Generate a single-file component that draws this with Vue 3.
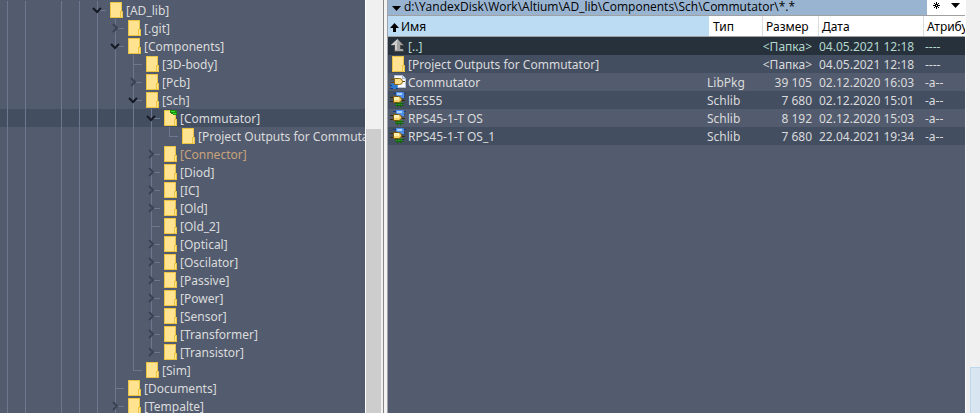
<script setup>
import { ref } from 'vue'

// depth is the guide column that joins the row to its parent
const tree = [
  { depth: 5, name: '[AD_lib]', state: 'open' },
  { depth: 6, name: '[.git]', state: 'closed' },
  { depth: 6, name: '[Components]', state: 'open' },
  { depth: 7, name: '[3D-body]' },
  { depth: 7, name: '[Pcb]', state: 'closed' },
  { depth: 7, name: '[Sch]', state: 'open' },
  { depth: 8, name: '[Commutator]', state: 'open', marked: true },
  { depth: 9, name: '[Project Outputs for Commutator]', last: true },
  { depth: 8, name: '[Connector]', state: 'closed', tinted: true },
  { depth: 8, name: '[Diod]', state: 'closed' },
  { depth: 8, name: '[IC]', state: 'closed' },
  { depth: 8, name: '[Old]', state: 'closed' },
  { depth: 8, name: '[Old_2]' },
  { depth: 8, name: '[Optical]', state: 'closed' },
  { depth: 8, name: '[Oscilator]', state: 'closed' },
  { depth: 8, name: '[Passive]', state: 'closed' },
  { depth: 8, name: '[Power]', state: 'closed' },
  { depth: 8, name: '[Sensor]', state: 'closed' },
  { depth: 8, name: '[Transformer]', state: 'closed' },
  { depth: 8, name: '[Transistor]', state: 'closed', last: true },
  { depth: 7, name: '[Sim]', last: true },
  { depth: 6, name: '[Documents]' },
  { depth: 6, name: '[Tempalte]', state: 'closed' },
]
const selected = ref('[Commutator]')

// the branch in this column has already ended above
const endedColumn = 2

const files = [
  { icon: 'up', name: '[..]', type: '', size: '<Папка>', date: '04.05.2021 12:18', attr: '----' },
  { icon: 'folder', name: '[Project Outputs for Commutator]', type: '', size: '<Папка>', date: '04.05.2021 12:18', attr: '----' },
  { icon: 'pkg', name: 'Commutator', type: 'LibPkg', size: '39 105', date: '02.12.2020 16:03', attr: '-a--' },
  { icon: 'sch', name: 'RES55', type: 'Schlib', size: '7 680', date: '02.12.2020 15:01', attr: '-a--' },
  { icon: 'sch', name: 'RPS45-1-T OS', type: 'Schlib', size: '8 192', date: '02.12.2020 15:03', attr: '-a--' },
  { icon: 'sch', name: 'RPS45-1-T OS_1', type: 'Schlib', size: '7 680', date: '22.04.2021 19:34', attr: '-a--' },
]
</script>

<template>
  <main class="app">
    <nav class="tree" aria-label="Папки">
      <ul>
        <li v-for="n in tree" :key="n.name" class="node" :class="{ selected: n.name === selected, tinted: n.tinted }">
          <span v-for="c in n.depth" :key="c" class="guide" :class="{ run: c - 1 !== endedColumn }"></span>
          <span class="guide branch" :class="{ run: !n.last, half: n.last, short: n.state }">
            <button v-if="n.state" class="toggle" type="button" :aria-label="n.name" :aria-expanded="n.state === 'open'">
              <svg width="10" height="10" viewBox="0 0 10 10" :class="n.state">
                <path v-if="n.state === 'open'" d="M1 3 5 7 9 3" />
                <path v-else d="M3 1 7 5 3 9" />
              </svg>
            </button>
          </span>
          <a class="label" href="#" @click.prevent="selected = n.name">
            <svg class="folder" width="13" height="16" viewBox="0 0 13 16">
              <rect x=".5" y=".5" width="11" height="15" fill="#ffe391" stroke="#ebc444" />
              <rect x="10.5" y="9.5" width="2" height="6" fill="#ffe391" stroke="#ebc444" />
              <g v-if="n.marked">
                <path d="M6 0h6v1h1v4H9V4H7V3H6z" fill="#178a17" />
                <path d="M7 1h4v1H7zM9 3h3v1H9z" fill="#3fe01c" />
              </g>
            </svg>
            <span class="text">{{ n.name }}</span>
          </a>
        </li>
      </ul>
    </nav>
    <div class="scroll"><div class="thumb"></div></div>
    <div class="splitter"></div>
    <section class="files">
      <header class="pathbar">
        <button class="path" type="button">
          <svg width="9" height="5" viewBox="0 0 9 5"><path d="M0 0h9L4.5 5z" /></svg>
          <span>d:\YandexDisk\Work\Altium\AD_lib\Components\Sch\Commutator\*.*</span>
        </button>
        <button class="tool" type="button" aria-label="Избранное">
          <svg width="7" height="7" viewBox="0 0 7 7"><path d="M3.5 0v7M0 3.5h7M1 1l5 5M6 1 1 6" stroke="#000" /><path d="M3 3h1v1H3z" fill="#fff" /></svg>
        </button>
        <button class="tool" type="button" aria-label="История">
          <svg width="9" height="5" viewBox="0 0 9 5"><path d="M0 0h9L4.5 5z" /></svg>
        </button>
      </header>
      <table>
        <colgroup><col /><col class="c-type" /><col class="c-size" /><col class="c-date" /><col class="c-attr" /></colgroup>
        <thead>
          <tr>
            <th class="sorted" aria-sort="ascending">
              <button type="button">
                <svg width="9" height="9" viewBox="0 0 9 9"><path d="M4.5 0 9 5H6v4H3V5H0z" /></svg>Имя
              </button>
            </th>
            <th><button type="button">Тип</button></th>
            <th><button type="button">Размер</button></th>
            <th><button type="button">Дата</button></th>
            <th><button type="button">Атрибу</button></th>
          </tr>
        </thead>
        <tbody>
          <tr v-for="f in files" :key="f.name" :class="{ parent: f.icon === 'up' }">
            <td class="name">
              <div class="entry">
                <svg v-if="f.icon === 'up'" width="16" height="16" viewBox="0 0 16 16">
                  <path d="M7.5 1 14 7v1h-3v3h3v3H4V8H1V7z" fill="#4c4c4c" />
                  <path d="M7.5 1 13 7h-3v4h3v2H5V7H1z" fill="#a4a4a4" />
                  <path d="M7.5 1 1 7h4v5h2V7z" fill="#cdcdcd" />
                </svg>
                <svg v-else-if="f.icon === 'folder'" width="16" height="16" viewBox="0 0 16 16">
                  <rect x="2.5" y=".5" width="11" height="15" fill="#ffe391" stroke="#ebc444" />
                  <rect x="12.5" y="9.5" width="2" height="6" fill="#ffe391" stroke="#ebc444" />
                </svg>
                <svg v-else-if="f.icon === 'pkg'" width="16" height="16" viewBox="0 0 16 16">
                  <path d="M4.5 1.5h8l3 3v9h-11z" fill="#f7faff" stroke="#b9c6da" />
                  <path d="M12.5 1.5v3h3" fill="#dde6f2" stroke="#9fb0c8" />
                  <path d="M1 9h5l2 3-1 3H2l-1-2z" fill="#2f78cf" />
                  <path d="M0 11.5h2M0 14.5h3M6 14.5h2" stroke="#0b3f8c" />
                  <path d="M1 5.5h3M1 8.5h3M12 7.5h3" stroke="#6b4a08" />
                  <path d="M4.5 4.5h5q3 0 3 3t-3 3h-5z" fill="#ffe08a" stroke="#8d6410" />
                </svg>
                <svg v-else width="16" height="16" viewBox="0 0 16 16">
                  <path d="M6 0h7l1 1v5H8L6 3z" fill="#4d8fea" />
                  <path d="M7 1h5v2H7z" fill="#a9d0ff" />
                  <path d="M3 1.5h3M14 1.5h2M14 4.5h1" stroke="#143f86" />
                  <path d="M6 10h6v4H6z" fill="#2b9224" />
                  <path d="M5 11.5h9M5 13.5h9M7.5 15.5v-3M10.5 15.5v-3" stroke="#176014" />
                  <path d="M0 5.5h4M0 9.5h4M12 8.5h3" stroke="#3d2c08" />
                  <path d="M3.5 4.5h5q3 0 3 3t-3 3h-5z" fill="#f8d26c" stroke="#7a560c" />
                  <path d="M4 5h5v3H4z" fill="#fff0ad" />
                </svg>
                <span class="text">{{ f.name }}</span>
              </div>
            </td>
            <td class="type">{{ f.type }}</td>
            <td class="size">{{ f.size }}</td>
            <td class="date">{{ f.date }}</td>
            <td class="attr">{{ f.attr }}</td>
          </tr>
        </tbody>
      </table>
    </section>
    <aside class="edge"><div class="edge-box"></div></aside>
  </main>
</template>

<style>
body { margin: 0; }
</style>

<style scoped>
.app {
  display: grid;
  grid-template-columns: 365fr 17px 6px 578fr 14px;
  height: 100vh;
  overflow: hidden;
  background: #f0f0f0;
  color: #dadbdc;
  font: 12px/16px "Noto Sans", "Open Sans", sans-serif;
}
button { margin: 0; padding: 0; border: 0; background: none; color: inherit; font: inherit; text-align: left; }
svg { display: block; flex: none; }
.text { padding-top: 2px; }

.tree { overflow: hidden; background: #535c6e; }
.tree ul { margin: 0; padding: 1px 0 0; list-style: none; }
.node { display: flex; height: 18px; white-space: nowrap; }
.node.selected { background: #444e61; }
.node.tinted { color: #c9a27a; }
.guide { flex: none; box-sizing: border-box; width: 18px; background: no-repeat 7px 0; }
.guide.run { background-image: linear-gradient(#6d7890, #6d7890); background-size: 1px 100%; }
.branch.run, .branch.half {
  background-image: linear-gradient(#6d7890, #6d7890), linear-gradient(#6d7890, #6d7890);
  background-position: 7px 0, 7px 9px;
  background-size: 1px 100%, 9px 1px;
}
.branch.half { background-size: 1px 9px, 9px 1px; }
.branch.short { background-position: 7px 0, 10px 9px; background-size: 1px 100%, 6px 1px; }
.branch.short.half { background-size: 1px 9px, 6px 1px; }
.toggle { display: flex; padding: 4px 0 4px 2px; }
.toggle svg { fill: none; stroke-width: 2; }
.toggle .open { stroke: #151a24; }
.toggle .closed { stroke: #3a4352; }
.label { display: flex; align-items: center; gap: 3px; padding-left: 2px; color: inherit; text-decoration: none; }

.scroll { padding-top: 129px; border-left: 1px solid #fff; background: #f0f0f0; }
.thumb { height: 100%; margin-right: 1px; background: #cdcdcd; }
.splitter { margin: 0 0 0 1px; border-left: 1px solid #85878b; border-right: 1px solid #a0a4aa; background: #f3f3f3; }

.files { min-width: 0; overflow: hidden; background: #535c6e; border-right: 1px solid #fff; }
.pathbar { display: flex; height: 15px; border-bottom: 1px solid #a0a0a0; background: #fff; color: #000; }
.path { display: flex; flex: 1; align-items: flex-start; gap: 3px; padding: 0 0 0 4px; min-width: 0; background: #99b4d1; font-family: "Open Sans", "Noto Sans", sans-serif; line-height: 14px; white-space: nowrap; }
.path svg { margin-top: 6px; }
.tool { display: flex; align-items: center; justify-content: center; width: 19px; padding-bottom: 4px; }

table { width: 100%; border-collapse: collapse; table-layout: fixed; }
.c-type { width: 53px; }
.c-size { width: 56px; }
.c-date { width: 105px; }
.c-attr { width: 42px; }
th { height: 20px; padding: 0; overflow: hidden; border-bottom: 1px solid #a0a0a0; background: #fff; color: #000; font-weight: 400; white-space: nowrap; }
th + th + th { box-shadow: inset 1px 0 #dcdcdc; }
th button { display: flex; align-items: center; padding: 3px 0 1px 4px; }
th.sorted { background: #bcdcf4; }
th.sorted button { padding-left: 2px; gap: 2px; }
td { height: 16px; padding: 2px 0 0; white-space: nowrap; }
td.name { height: 18px; padding: 0; }
tbody tr:nth-child(even) { background: #444e61; }
tbody tr.parent { background: #27313c; color: #b4d8cc; }
.entry { display: flex; align-items: center; gap: 2px; padding-left: 2px; }
.type { text-indent: -2px; }
.size { padding-right: 6px; text-align: right; }
.date { padding-left: 1px; }
.attr { padding-left: 2px; }

.edge { display: flex; flex-direction: column; justify-content: flex-end; padding-left: 4px; }
.edge-box { height: 45px; border: solid #bcd8ec; border-width: 1px 0 0 1px; background: #d9e6f1; }
</style>
